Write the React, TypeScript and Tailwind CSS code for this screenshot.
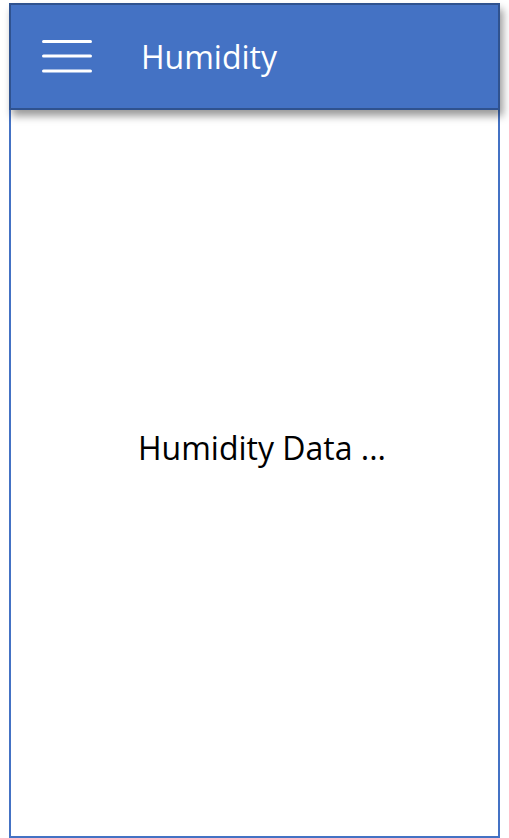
import React from "react";

function MenuIcon() {
  return (
    <svg width="50" height="36" viewBox="0 0 50 36" className="block">
      <rect x="0" y="1" width="50" height="3" rx="1.5" fill="#ffffff" />
      <rect x="0" y="15.5" width="50" height="3" rx="1.5" fill="#ffffff" />
      <rect x="0" y="30.5" width="50" height="3" rx="1.5" fill="#ffffff" />
    </svg>
  );
}

export default function App() {
  return (
    <div
      className="w-[509px] h-[838px] bg-white px-[9px] pt-[3px] flex flex-col"
      style={{ fontFamily: '"Open Sans", "Noto Sans", sans-serif' }}
    >
      {/* app bar */}
      <header className="relative z-10 h-[107px] shrink-0 flex items-center bg-[#4472C4] border-2 border-[#2F528F] shadow-[3px_6px_8px_rgba(0,0,0,0.4)] pl-[31px]">
        <MenuIcon />
        <h1 className="ml-[49px] text-white text-[32px] leading-none">Humidity</h1>
      </header>

      {/* content */}
      <main className="flex-1 flex items-center justify-center border-x-2 border-b-2 border-[#4472C4] pl-[15px] pb-[50px]">
        <p className="text-black text-[32px] leading-none">Humidity Data ...</p>
      </main>
    </div>
  );
}
